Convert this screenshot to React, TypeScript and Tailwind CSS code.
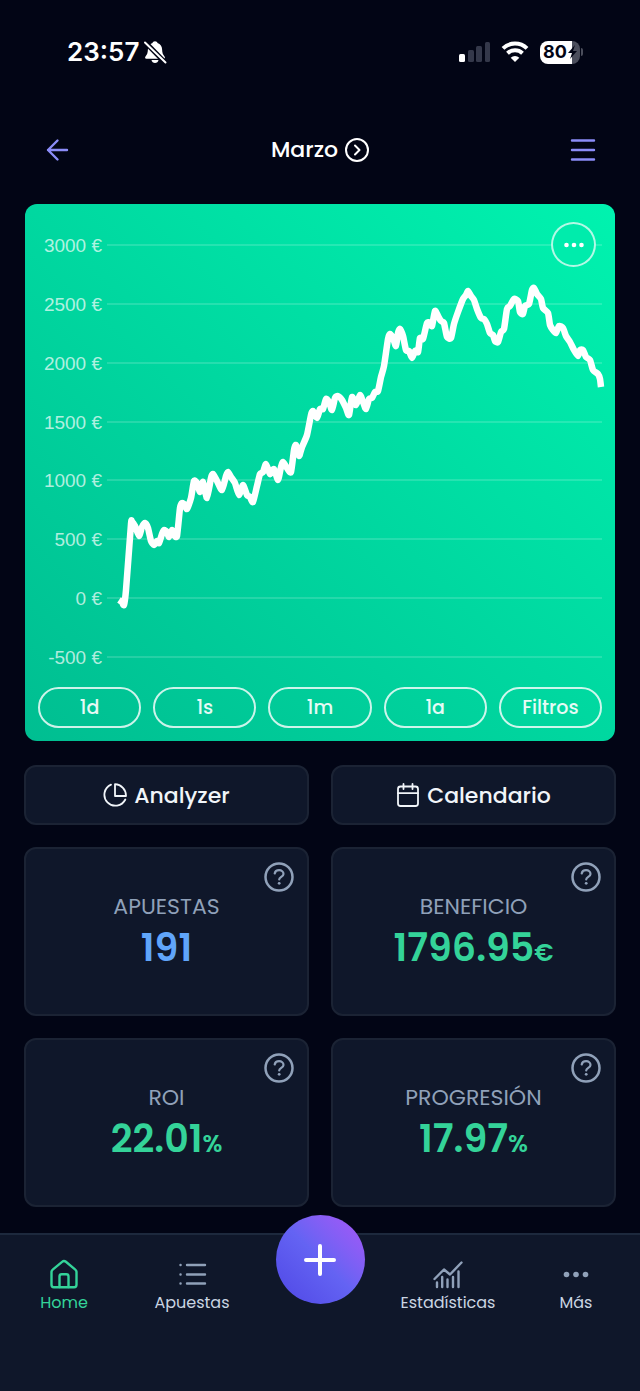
import type { ReactNode } from "react"

type Point = [number, number]

const gridLines = [
  { label: "3000 €", y: 245 },
  { label: "2500 €", y: 304 },
  { label: "2000 €", y: 363 },
  { label: "1500 €", y: 422 },
  { label: "1000 €", y: 480 },
  { label: "500 €", y: 539 },
  { label: "0 €", y: 598 },
  { label: "-500 €", y: 657 },
]

const points: Point[] = [
  [119, 600], [122, 602], [124, 605], [126, 590], [131, 524], [132, 522], [135, 526], [139, 536],
  [142, 527], [145, 523], [148, 528], [151, 541], [154, 545], [157, 541], [159, 543], [162, 534],
  [164, 530], [167, 532], [169, 537], [172, 530], [174, 535], [177, 536], [180, 508], [182, 503],
  [185, 505], [187, 509], [191, 498], [194, 481], [197, 483], [200, 492], [203, 482], [207, 498],
  [211, 478], [213, 474], [217, 481], [222, 490], [226, 476], [228, 472], [231, 477], [235, 483],
  [239, 495], [243, 485], [247, 495], [250, 497], [253, 502], [257, 486], [260, 474], [263, 472],
  [266, 464], [270, 474], [274, 469], [278, 480], [281, 467], [283, 462], [287, 468], [291, 472],
  [294, 450], [296, 445], [299, 456], [302, 447], [307, 435], [311, 415], [313, 411], [317, 418],
  [320, 409], [323, 409], [326, 399], [329, 402], [332, 410], [335, 398], [338, 396], [342, 400],
  [346, 408], [349, 415], [352, 397], [356, 405], [360, 395], [363, 402], [366, 409], [369, 399],
  [372, 398], [375, 392], [378, 391], [381, 377], [384, 366], [388, 339], [390, 334], [393, 338],
  [396, 346], [398, 333], [400, 329], [403, 336], [406, 350], [409, 351], [412, 358], [415, 351],
  [418, 352], [420, 338], [423, 339], [427, 323], [430, 323], [432, 326], [435, 311], [438, 316],
  [441, 321], [444, 323], [447, 337], [451, 338], [454, 324], [458, 312], [463, 299], [466, 295],
  [468, 291], [471, 296], [474, 300], [477, 309], [481, 318], [484, 319], [487, 324], [490, 333],
  [493, 335], [495, 341], [498, 342], [501, 332], [504, 329], [507, 309], [510, 306], [514, 299],
  [518, 301], [520, 312], [523, 314], [525, 306], [529, 304], [532, 290], [534, 288], [537, 294],
  [541, 299], [543, 308], [548, 313], [550, 325], [553, 330], [556, 333], [559, 326], [563, 328],
  [566, 336], [570, 342], [574, 350], [578, 356], [580, 350], [583, 350], [586, 357], [590, 360],
  [593, 370], [598, 374], [600, 379], [601, 387],
]

// each segment is a soft curve whose handles follow the neighbouring points
function toPath(pts: Point[]) {
  let d = `M${pts[0][0]} ${pts[0][1]}`
  for (let i = 0; i < pts.length - 1; i++) {
    const p0 = pts[i - 1] ?? pts[i]
    const p1 = pts[i]
    const p2 = pts[i + 1]
    const p3 = pts[i + 2] ?? p2
    d += ` C${p1[0] + (p2[0] - p0[0]) / 10} ${p1[1] + (p2[1] - p0[1]) / 10} ${p2[0] - (p3[0] - p1[0]) / 10} ${p2[1] - (p3[1] - p1[1]) / 10} ${p2[0]} ${p2[1]}`
  }
  return d
}

function StatusBar() {
  return (
    <div className="flex items-center justify-between pt-[34px] pr-[57px] pl-[67px] font-['Inter',sans-serif]">
      <div className="flex items-center gap-1">
        <span className="text-[26px] leading-9 font-semibold">23:57</span>
        <svg className="size-6" viewBox="0 0 24 24" fill="currentColor">
          <path d="M12 1.2c1.300 0 2.300.7 2.500 1.800 3 1 4.500 3.400 4.600 6.500.1 3.600.9 5.200 2.400 6.900.8.900.4 2.300-.8 2.300H3.300c-1.200 0-1.600-1.400-.8-2.300 1.500-1.700 2.300-3.300 2.400-6.900.1-3.100 1.600-5.500 4.600-6.500.2-1.100 1.200-1.800 2.500-1.800z" />
          <path d="M8.500 20h7c-.3 1.800-1.700 3-3.500 3s-3.200-1.200-3.500-3z" />
          <path d="M1.500 1.500 23 23.500" stroke="#020515" strokeWidth="5" />
          <path d="M2 2.500 22.500 22.500" stroke="currentColor" strokeWidth="2" strokeLinecap="round" />
        </svg>
      </div>
      <div className="flex items-center">
        <svg className="h-6 w-8" viewBox="0 0 32 24" fill="currentColor">
          <rect x="0" y="14" width="6" height="8" rx="1.500" />
          <rect x="9" y="10" width="6" height="12" rx="1.500" fill="#34384a" />
          <rect x="17" y="6" width="6" height="16" rx="1.500" fill="#34384a" />
          <rect x="26" y="2" width="5" height="20" rx="1.500" fill="#34384a" />
        </svg>
        <svg className="ml-[10px] h-6 w-7" viewBox="0 0 28 24" fill="none" stroke="currentColor" strokeWidth="4">
          <path d="M2 8.400a17.200 17.200 0 0 1 24 0" />
          <path d="M6.500 13.300a11 11 0 0 1 15 0" />
          <path d="M14 22l-4.300-4.300a6.100 6.100 0 0 1 8.600 0z" fill="currentColor" stroke="none" />
        </svg>
        <div className="ml-[11px] flex items-center">
          <div className="flex h-[23px] w-[40px] items-center rounded-lg bg-linear-to-r from-white from-80% to-[#4b4e5c] to-80% pl-[3px] text-[#020515]">
            <span className="text-lg leading-none font-bold">80</span>
            <svg className="h-4 w-[11px]" viewBox="0 0 11 16" fill="currentColor">
              <path d="M8 1 1 9h4L3 15l7-8H6z" />
            </svg>
          </div>
          <span className="ml-px h-2 w-[2px] rounded-r bg-[#4b4e5c]" />
        </div>
      </div>
    </div>
  )
}

function Header() {
  return (
    <header className="mt-[55px] flex h-[50px] items-center justify-between px-11">
      <button aria-label="Volver" className="text-[#8b8cf8]">
        <svg className="size-[26px]" viewBox="0 0 26 26" fill="none" stroke="currentColor" strokeWidth="2.400" strokeLinecap="round" strokeLinejoin="round">
          <path d="M13.500 3.500 4 13l9.500 9.500M4 13h19" />
        </svg>
      </button>
      <button className="flex items-center gap-[7px] text-[22px] leading-8 font-medium">
        Marzo
        <svg className="size-6" viewBox="0 0 24 24" fill="none" stroke="currentColor" strokeWidth="2" strokeLinecap="round" strokeLinejoin="round">
          <circle cx="12" cy="12" r="11" />
          <path d="m10 7.500 4.500 4.500-4.500 4.500" />
        </svg>
      </button>
      <button aria-label="Menú" className="text-[#8b8cf8]">
        <svg className="size-[26px]" viewBox="0 0 26 26" fill="none" stroke="currentColor" strokeWidth="2.400" strokeLinecap="round">
          <path d="M2 3.500h22M2 13h22M2 22.500h22" />
        </svg>
      </button>
    </header>
  )
}

function Chart() {
  return (
    <section className="relative mx-px overflow-hidden rounded-xl bg-linear-to-tr from-[#00be91] via-[#00d8a0] to-[#00f3af]">
      <svg className="block w-full" viewBox="25 204 590 483">
        {gridLines.map(({ label, y }) => (
          <g key={label}>
            <text x="102" y={y + 7} textAnchor="end" fill="#fff" fillOpacity="0.7" className="font-['Liberation_Sans',Arial,sans-serif] text-[19px]">
              {label}
            </text>
            <path d={`M107 ${y}H602`} stroke="#fff" strokeOpacity="0.2" strokeWidth="1.500" />
          </g>
        ))}
        <path d={toPath(points)} fill="none" stroke="#fff" strokeWidth="6.500" strokeLinecap="butt" strokeLinejoin="round" />
      </svg>
      <button aria-label="Opciones" className="absolute top-[18px] right-[19px] flex size-[45px] items-center justify-center rounded-full border-2 border-white/70 bg-[#00ecac]">
        <svg className="h-2 w-5" viewBox="0 0 20 8" fill="currentColor">
          <circle cx="2.500" cy="4" r="2.300" />
          <circle cx="10" cy="4" r="2.300" />
          <circle cx="17.500" cy="4" r="2.300" />
        </svg>
      </button>
      <div className="grid grid-cols-5 gap-3 px-[13px] pb-[13px]">
        {["1d", "1s", "1m", "1a", "Filtros"].map((range) => (
          <button key={range} className="h-[41px] rounded-full border-2 border-white/80 text-[19px] leading-6 font-medium text-white/90">
            {range}
          </button>
        ))}
      </div>
    </section>
  )
}

function ActionButton({ icon, children }: { icon: ReactNode; children: ReactNode }) {
  return (
    <button className="flex h-[60px] items-center justify-center gap-[7px] rounded-xl border-2 border-[#1b2334] bg-[#0f172a] text-[22px] font-medium text-slate-100">
      <svg className="size-6" viewBox="0 0 24 24" fill="none" stroke="currentColor" strokeWidth="1.800" strokeLinecap="round" strokeLinejoin="round">
        {icon}
      </svg>
      {children}
    </button>
  )
}

function StatCard({ title, value, unit, color }: { title: string; value: string; unit?: string; color: string }) {
  return (
    <div className="relative flex h-[169px] flex-col items-center rounded-xl border-2 border-[#1b2334] bg-[#0f172a] pt-10">
      <button aria-label={`Ayuda: ${title}`} className="absolute top-[13px] right-[13px] text-slate-400">
        <svg className="size-[30px]" viewBox="0 0 30 30" fill="none" stroke="currentColor" strokeWidth="2.500" strokeLinecap="round" strokeLinejoin="round">
          <circle cx="15" cy="15" r="13.500" />
          <path d="M10.700 11.500c.4-2 2.200-3.300 4.400-3.300 2.500 0 4.400 1.500 4.400 3.700 0 2.900-4.300 3-4.300 5.600" strokeWidth="2.200" />
          <circle cx="15.200" cy="21.300" r="1.400" fill="currentColor" stroke="none" />
        </svg>
      </button>
      <h2 className="text-[22px] leading-9 font-normal text-slate-400">{title}</h2>
      <p className={`text-[38px] leading-[46px] font-semibold ${color}`}>
        {value}
        {unit && <span className="text-2xl">{unit}</span>}
      </p>
    </div>
  )
}

function NavItem({ label, color = "text-slate-400", labelColor = "text-slate-300", children }: { label: string; color?: string; labelColor?: string; children: ReactNode }) {
  return (
    <a href="#" className={`flex flex-col items-center pt-6 ${color}`}>
      <svg className="size-8" viewBox="0 0 32 32" fill="none" stroke="currentColor" strokeWidth="2.400" strokeLinecap="round" strokeLinejoin="round">
        {children}
      </svg>
      <span className={`text-base leading-6 ${labelColor}`}>{label}</span>
    </a>
  )
}

function BottomNav() {
  return (
    <nav className="relative mt-[26px] grid flex-1 grid-cols-5 border-t-2 border-slate-800 bg-[#0f172a] pb-[74px]">
      <NavItem label="Home" color="text-[#34d399]" labelColor="text-[#34d399]">
        <path d="M3.500 13c0-1 .4-1.800 1.200-2.400l9.400-7.800c1.100-.9 2.700-.9 3.800 0l9.400 7.800c.8.600 1.200 1.400 1.200 2.400v12.800c0 1.400-1 2.400-2.400 2.400H5.900c-1.400 0-2.400-1-2.400-2.400z" />
        <path d="M11.500 28V17.500c0-1.400.8-2.200 2.200-2.200h4.600c1.400 0 2.200.8 2.200 2.200V28" />
      </NavItem>
      <NavItem label="Apuestas">
        <path d="M11 6h18M11 15.500h18M11 24.500h18M4.500 6h.1M4.500 15.500h.1M4.500 24.500h.1" />
      </NavItem>
      <button aria-label="Añadir" className="-mt-5 flex size-[89px] items-center justify-center justify-self-center rounded-full bg-linear-to-tr from-[#4f46e5] via-[#6463f3] to-[#a855f7]">
        <svg className="size-8" viewBox="0 0 32 32" stroke="currentColor" strokeWidth="4" strokeLinecap="round">
          <path d="M16 2v28M2 16h28" />
        </svg>
      </button>
      <NavItem label="Estadísticas">
        <path d="M2.500 20 12 10.500l6 5L29.500 3.500" />
        <path d="M5 28v-4.500M10.200 28V18M15.500 28v-7.500M21 28V18M26.500 28V12.500" />
      </NavItem>
      <NavItem label="Más">
        <g fill="currentColor" stroke="none">
          <circle cx="6.500" cy="15.500" r="2.800" />
          <circle cx="16" cy="15.500" r="2.800" />
          <circle cx="25.500" cy="15.500" r="2.800" />
        </g>
      </NavItem>
    </nav>
  )
}

export default function App() {
  return (
    <div className="flex min-h-screen flex-col bg-[#020515] font-['Poppins','Inter',sans-serif] text-white">
      <StatusBar />
      <Header />
      <main className="mt-[29px] px-6">
        <Chart />
        <div className="mt-6 grid grid-cols-2 gap-[22px]">
          <ActionButton
            icon={
              <>
                <path d="M12 1.200V13h11A11.500 11.500 0 0 0 12 1.200z" />
                <path d="M8 1.600A11 11 0 1 0 22.300 16.500" />
              </>
            }
          >
            Analyzer
          </ActionButton>
          <ActionButton
            icon={
              <>
                <rect x="2" y="3.500" width="20" height="19.500" rx="2.500" />
                <path d="M2 10.200h20M7.500 1v5M16.500 1v5" />
              </>
            }
          >
            Calendario
          </ActionButton>
          <StatCard title="APUESTAS" value="191" color="text-[#60a5fa]" />
          <StatCard title="BENEFICIO" value="1796.95" unit="€" color="text-[#34d399]" />
          <StatCard title="ROI" value="22.01" unit="%" color="text-[#34d399]" />
          <StatCard title="PROGRESIÓN" value="17.97" unit="%" color="text-[#34d399]" />
        </div>
      </main>
      <BottomNav />
    </div>
  )
}
